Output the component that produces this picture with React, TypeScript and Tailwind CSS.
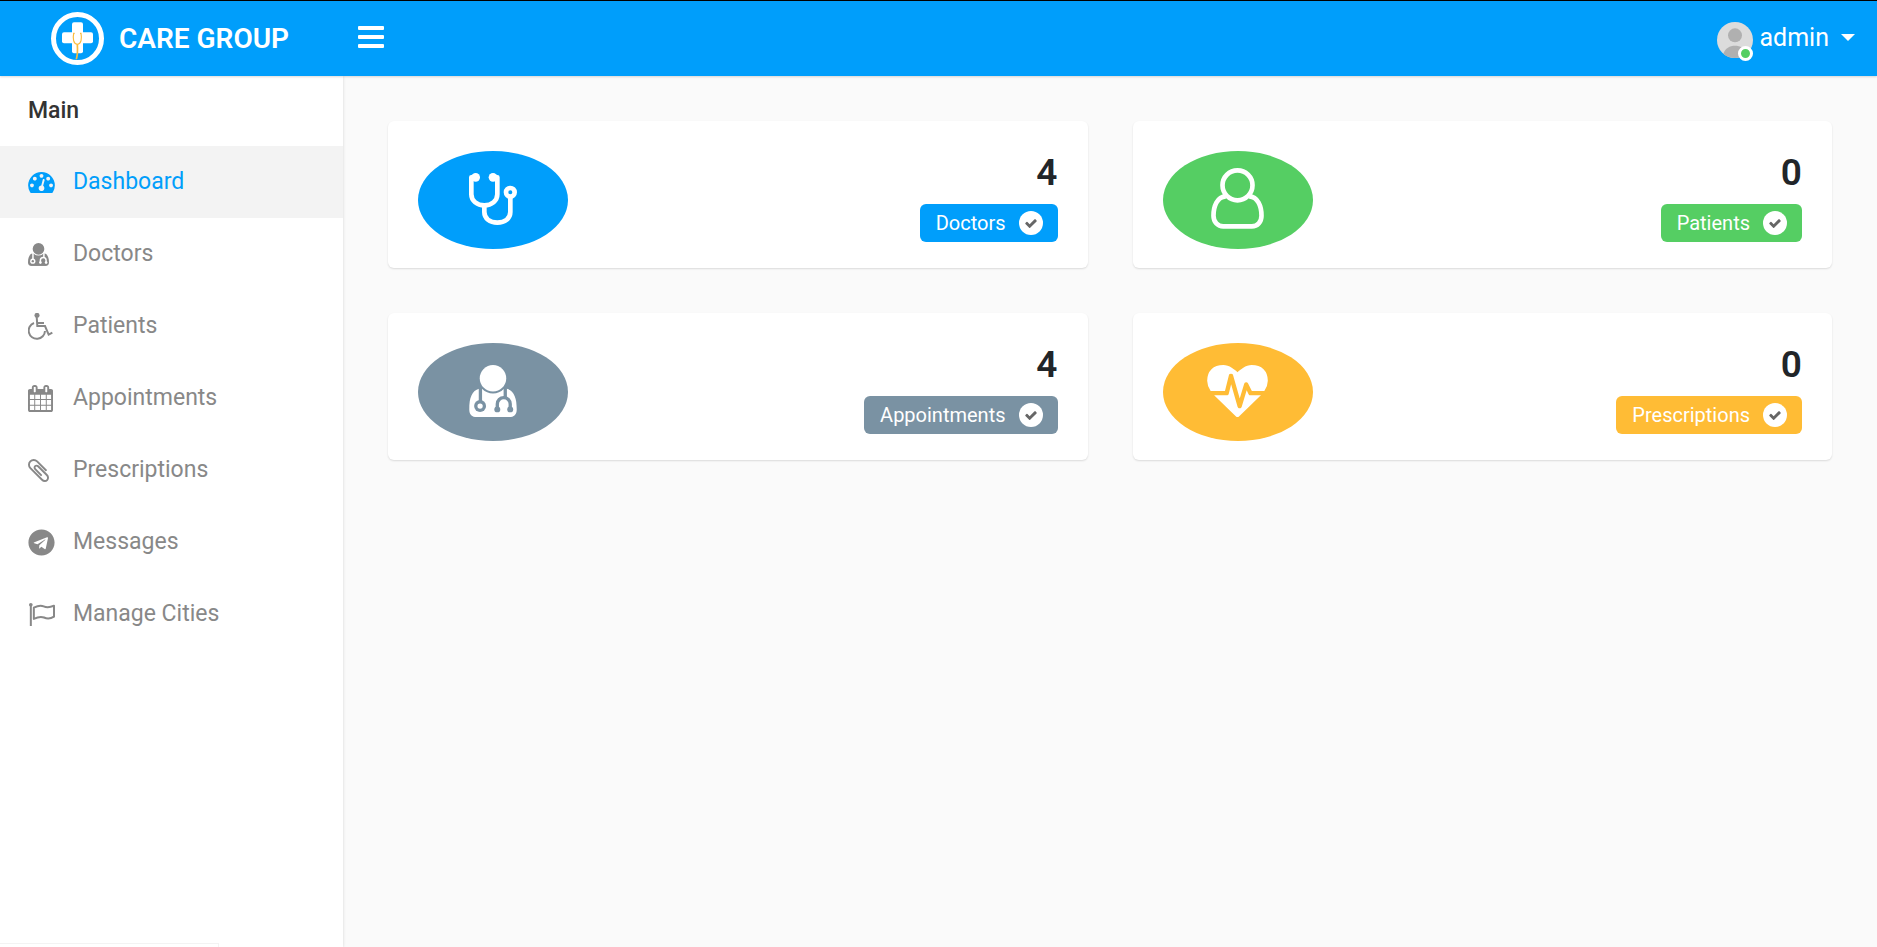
import { useId, type ReactNode } from "react";
import { FaTelegram } from "react-icons/fa";

type IconProps = { className?: string };

function Glyph({ className, viewBox, d }: IconProps & { viewBox: string; d: string }) {
  return (
    <svg className={className} viewBox={viewBox} fill="currentColor" aria-hidden="true">
      <path d={d} />
    </svg>
  );
}

const DashboardIcon = ({ className }: IconProps) => (
  <Glyph
    className={className}
    viewBox="0 256 1792 1408"
    d="M384 1152q0-53-37.5-90.5t-90.5-37.5-90.5 37.5-37.5 90.5 37.5 90.5 90.5 37.5 90.5-37.5 37.5-90.5zm192-448q0-53-37.5-90.5t-90.5-37.5-90.5 37.5-37.5 90.5 37.5 90.5 90.5 37.5 90.5-37.5 37.5-90.5zm428 481l101-382q6-26-7.5-48.5t-38.5-29.5-48 6.5-30 39.5l-101 382q-60 5-107 43.5t-63 98.5q-20 77 20 146t117 89 146-20 89-117q16-60-6-117t-72-91zm660-33q0-53-37.5-90.5t-90.5-37.5-90.5 37.5-37.5 90.5 37.5 90.5 90.5 37.5 90.5-37.5 37.5-90.5zm-640-640q0-53-37.5-90.5t-90.5-37.5-90.5 37.5-37.5 90.5 37.5 90.5 90.5 37.5 90.5-37.5 37.5-90.5zm448 192q0-53-37.5-90.5t-90.5-37.5-90.5 37.5-37.5 90.5 37.5 90.5 90.5 37.5 90.5-37.5 37.5-90.5zm320 448q0 261-141 483-19 29-54 29h-1402q-35 0-54-29-141-221-141-483 0-182 71-348t191-286 286-191 348-71 348 71 286 191 191 286 71 348z"
  />
);

const CalendarIcon = ({ className }: IconProps) => (
  <Glyph
    className={className}
    viewBox="64 0 1664 1792"
    d="M192 1664h288v-288h-288v288zm352 0h320v-288h-320v288zm-352-352h288v-320h-288v320zm352 0h320v-320h-320v320zm-352-384h288v-288h-288v288zm736 736h320v-288h-320v288zm-384-736h320v-288h-320v288zm768 736h288v-288h-288v288zm-384-352h320v-320h-320v320zm-352-864v-288q0-13-9.5-22.5t-22.5-9.5h-64q-13 0-22.5 9.5t-9.5 22.5v288q0 13 9.5 22.5t22.5 9.5h64q13 0 22.5-9.5t9.5-22.5zm736 864h288v-320h-288v320zm-384-384h320v-288h-320v288zm384 0h288v-288h-288v288zm32-480v-288q0-13-9.5-22.5t-22.5-9.5h-64q-13 0-22.5 9.5t-9.5 22.5v288q0 13 9.5 22.5t22.5 9.5h64q13 0 22.5-9.5t9.5-22.5zm384-64v1280q0 52-38 90t-90 38h-1408q-52 0-90-38t-38-90v-1280q0-52 38-90t90-38h128v-96q0-66 47-113t113-47h64q66 0 113 47t47 113v96h384v-96q0-66 47-113t113-47h64q66 0 113 47t47 113v96h128q52 0 90 38t38 90z"
  />
);

const PaperclipIcon = ({ className }: IconProps) => (
  <Glyph
    className={className}
    viewBox="196 132 1400 1528"
    d="M1596 1385q0 117-79 196t-196 79q-135 0-235-100l-777-776q-113-115-113-271 0-159 110-270t269-111q158 0 273 113l605 606q10 10 10 22 0 16-30.5 46.5t-46.5 30.5q-13 0-23-10l-606-607q-79-77-181-77-106 0-179 75t-73 181q0 105 76 181l776 777q63 63 145 63 64 0 106-42t42-106q0-82-63-145l-581-581q-26-24-60-24-29 0-48 19t-19 48q0 32 25 59l410 410q10 10 10 22 0 16-31 47t-47 31q-12 0-22-10l-410-410q-63-61-63-149 0-82 57-139t139-57q88 0 149 63l581 581q100 98 100 235z"
  />
);

const FlagIcon = ({ className }: IconProps) => (
  <svg className={className} viewBox="0 0 81 69" fill="none" stroke="currentColor" strokeWidth="6" aria-hidden="true">
    <circle cx="8.500" cy="5.500" r="5.500" fill="currentColor" stroke="none" />
    <path d="M8.500 5V69" />
    <path d="M17.500 14C29 8 39 6 47 10C57 15 65 14 78 8V41C67 48 57 48 48 43.500C38 39.500 29 42 17.500 47.500Z" strokeLinejoin="round" />
  </svg>
);

const HeartbeatIcon = ({ className }: IconProps) => (
  <Glyph
    className={className}
    viewBox="0 0 1792 1536"
    d="M1280 896h305q-5 6-10 10.5t-9 7.5l-3 4-623 600q-18 18-44 18t-44-18l-624-602q-5-2-21-20h369q22 0 39.5-13.5t22.5-34.5l70-281 190 667q6 20 23 33t39 13q21 0 38-13t23-33l146-485 56 112q18 35 57 35zm512-428q0 145-103 300h-369l-111-221q-8-17-25.5-27t-36.5-8q-45 5-56 46l-129 430-196-686q-6-20-23.5-33t-39.5-13-39 13.5-22 34.5l-116 464h-423q-103-155-103-300 0-220 127-344t351-124q62 0 126.5 21.5t120 58 95.5 68.5 76 68q36-36 76-68t95.5-68.5 120-58 126.5-21.5q224 0 351 124t127 344z"
  />
);

const CheckIcon = ({ className }: IconProps) => (
  <Glyph
    className={className}
    viewBox="121 312 1550 1210"
    d="M1671 566q0 40-28 68l-724 724-136 136q-28 28-68 28t-68-28l-136-136-362-362q-28-28-28-68t28-68l136-136q28-28 68-28t68 28l294 295 656-657q28-28 68-28t68 28l136 136q28 28 28 68z"
  />
);

function DoctorIcon({ className }: IconProps) {
  const id = useId();
  return (
    <svg className={className} viewBox="0 0 144 157" fill="currentColor" aria-hidden="true">
      <mask id={id}>
        <rect width="144" height="157" fill="#fff" />
        <circle cx="72" cy="40" r="46" fill="#000" />
        <g fill="none" stroke="#000" strokeWidth="10">
          <path d="M34 62V110M109 62V98" />
          <path d="M85 133V118a19.5 19.5 0 0 1 39 0V133" />
        </g>
        <circle cx="33" cy="124" r="18" fill="#000" />
        <circle cx="33" cy="124" r="8" fill="#fff" />
        <circle cx="85" cy="134" r="9" fill="#000" />
        <circle cx="124" cy="134" r="9" fill="#000" />
      </mask>
      <path
        mask={`url(#${id})`}
        d="M30 72C9 77 0 100 0 134C0 149 9 157 23 157H121C135 157 144 149 144 134C144 100 135 77 114 72L72 60Z"
      />
      <circle cx="72" cy="40" r="40" />
    </svg>
  );
}

const WheelchairIcon = ({ className }: IconProps) => (
  <svg className={className} viewBox="0 0 75 81" fill="none" stroke="currentColor" strokeWidth="6" aria-hidden="true">
    <circle cx="27" cy="7" r="7.500" fill="currentColor" stroke="none" />
    <path d="M26 10L28 39H51L62 65L73 59M27 30H48" />
    <path d="M18 30A24.500 24.500 0 1 0 51 54" />
  </svg>
);

const StethoscopeIcon = ({ className }: IconProps) => (
  <svg className={className} viewBox="0 0 144 156" fill="none" stroke="currentColor" strokeWidth="14" aria-hidden="true">
    <path d="M20 13H7V64C7 83 24 97 46 97S85 83 85 64V13H72" strokeLinejoin="round" />
    <path d="M46 97V117C46 136 62 149 85 149S124 136 124 117V70" />
    <circle cx="124" cy="58" r="13" />
    <g fill="currentColor" stroke="none">
      <circle cx="20" cy="13" r="13" />
      <circle cx="72" cy="13" r="13" />
    </g>
  </svg>
);

const UserIcon = ({ className }: IconProps) => (
  <svg className={className} viewBox="0 0 158 183" fill="none" stroke="currentColor" strokeWidth="14" aria-hidden="true">
    <circle cx="79" cy="52" r="45" />
    <path d="M44 85C18 86 7 115 7 143C7 162 20 175 36 175H122C139 175 151 162 151 143C151 115 140 86 114 85" />
  </svg>
);

const LogoMark = ({ className }: IconProps) => (
  <svg className={className} viewBox="0 0 159 159" fill="none" aria-hidden="true">
    <circle cx="79.500" cy="79.500" r="72" stroke="#fff" strokeWidth="15" />
    <rect x="63" y="31" width="33" height="93" rx="6" fill="#fff" />
    <rect x="33" y="61" width="93" height="33" rx="6" fill="#fff" />
    <g stroke="#fbbc3c" strokeWidth="3.500">
      <path d="M71 64H68C65 80 67 96 79 97C91 96 93 80 90 64H87" />
      <path d="M79 97C80 112 80 128 76 142" strokeWidth="5" />
    </g>
  </svg>
);

const AvatarPicture = ({ className }: IconProps) => (
  <svg className={className} viewBox="0 0 108 108" aria-hidden="true">
    <circle cx="54" cy="54" r="54" fill="#dcdcdc" />
    <circle cx="54" cy="40" r="21" fill="#b0b0b0" />
    <path d="M19 95C25 78 38 71 54 71S83 78 89 95A54 54 0 0 1 19 95Z" fill="#b0b0b0" />
  </svg>
);

type NavItem = { label: string; icon: ReactNode; active?: boolean };

const navItems: NavItem[] = [
  { label: "Dashboard", icon: <DashboardIcon className="h-[21px] w-[27px]" />, active: true },
  { label: "Doctors", icon: <DoctorIcon className="h-[23px] w-[21px]" /> },
  { label: "Patients", icon: <WheelchairIcon className="h-[27px] w-[25px]" /> },
  { label: "Appointments", icon: <CalendarIcon className="h-[27px] w-[25px]" /> },
  { label: "Prescriptions", icon: <PaperclipIcon className="h-[23px] w-[21px]" /> },
  { label: "Messages", icon: <FaTelegram className="size-[27px]" /> },
  { label: "Manage Cities", icon: <FlagIcon className="h-[23px] w-[27px]" /> },
];

type Stat = { label: string; value: number; color: string; icon: ReactNode };

const stats: Stat[] = [
  { label: "Doctors", value: 4, color: "bg-[#009efb]", icon: <StethoscopeIcon className="h-[52px] w-12" /> },
  { label: "Patients", value: 0, color: "bg-[#55ce63]", icon: <UserIcon className="h-[61px] w-[53px]" /> },
  { label: "Appointments", value: 4, color: "bg-[#7a92a3]", icon: <DoctorIcon className="h-[52px] w-12" /> },
  { label: "Prescriptions", value: 0, color: "bg-[#ffbc35]", icon: <HeartbeatIcon className="h-[52px] w-[61px]" /> },
];

function Header() {
  return (
    <header className="relative z-10 flex h-[76px] items-center border-t border-black bg-[#009efb] text-white shadow-[0_1px_2px_rgba(0,0,0,0.15)]">
      <a href="#home" className="flex w-[343px] items-center gap-[15px] pl-[51px]">
        <LogoMark className="size-[53px]" />
        <span className="text-[28px] font-semibold">CARE GROUP</span>
      </a>
      <button type="button" aria-label="Toggle menu" className="mb-[3px] ml-[15px] flex w-[26px] flex-col gap-[5px]">
        <span className="h-1 w-full rounded-[1px] bg-white" />
        <span className="h-1 w-full rounded-[1px] bg-white" />
        <span className="h-1 w-full rounded-[1px] bg-white" />
      </button>
      <button type="button" className="mr-[22px] mb-0.5 ml-auto flex items-center">
        <span className="relative mt-1">
          <AvatarPicture className="size-9" />
          <span className="absolute right-0 -bottom-[3px] size-[15px] rounded-full border-[3px] border-white bg-[#55ce63]" />
        </span>
        <span className="ml-1.5 text-[25px]">admin</span>
        <svg className="ml-3 h-[7px] w-[14px]" viewBox="0 0 14 7" fill="currentColor" aria-hidden="true">
          <path d="M0 0H14L7 7Z" />
        </svg>
      </button>
    </header>
  );
}

function Sidebar() {
  return (
    <aside className="relative w-[343px] shrink-0 bg-white shadow-[0_0_3px_rgba(0,0,0,0.15)]">
      <h2 className="flex h-[70px] items-center pl-7 text-[23px] font-medium text-[#333]">Main</h2>
      <nav>
        <ul>
          {navItems.map((item) => (
            <li key={item.label}>
              <a
                href={`#${item.label}`}
                className={
                  item.active
                    ? "flex h-[72px] items-center bg-[#f3f3f3] pl-7 text-[#009efb]"
                    : "flex h-[72px] items-center pl-7 text-[#888]"
                }
              >
                <span className="flex w-[45px] items-center">{item.icon}</span>
                <span className="text-[23px]">{item.label}</span>
              </a>
            </li>
          ))}
        </ul>
      </nav>
      <div className="absolute bottom-0 left-0 h-1 w-[219px] border-t border-r border-[#f3f3f3] bg-white" />
    </aside>
  );
}

function StatCard({ label, value, color, icon }: Stat) {
  return (
    <section className="flex h-[147px] items-start justify-between rounded-md bg-white p-[30px] shadow-[0_1px_2px_rgba(0,0,0,0.13)]">
      <div className={`flex h-[98px] w-[150px] items-center justify-center rounded-[50%] pb-[3px] text-white ${color}`}>{icon}</div>
      <div className="flex flex-col items-end">
        <h3 className="text-[37px] leading-[44px] font-semibold text-[#212529]">{value}</h3>
        <div className={`mt-[9px] flex h-[38px] items-center gap-[13px] rounded-md pr-[15px] pl-4 text-white ${color}`}>
          <span className="text-xl">{label}</span>
          <span className="flex size-6 items-center justify-center rounded-full bg-white text-[#666]">
            <CheckIcon className="h-[9px] w-3" />
          </span>
        </div>
      </div>
    </section>
  );
}

export default function App() {
  return (
    <div className="flex min-h-screen flex-col bg-[#fafafa] font-['Roboto',sans-serif]">
      <Header />
      <div className="flex flex-1">
        <Sidebar />
        <main className="grid flex-1 grid-cols-2 content-start gap-[45px] p-[45px]">
          {stats.map((stat) => (
            <StatCard key={stat.label} {...stat} />
          ))}
        </main>
      </div>
    </div>
  );
}
